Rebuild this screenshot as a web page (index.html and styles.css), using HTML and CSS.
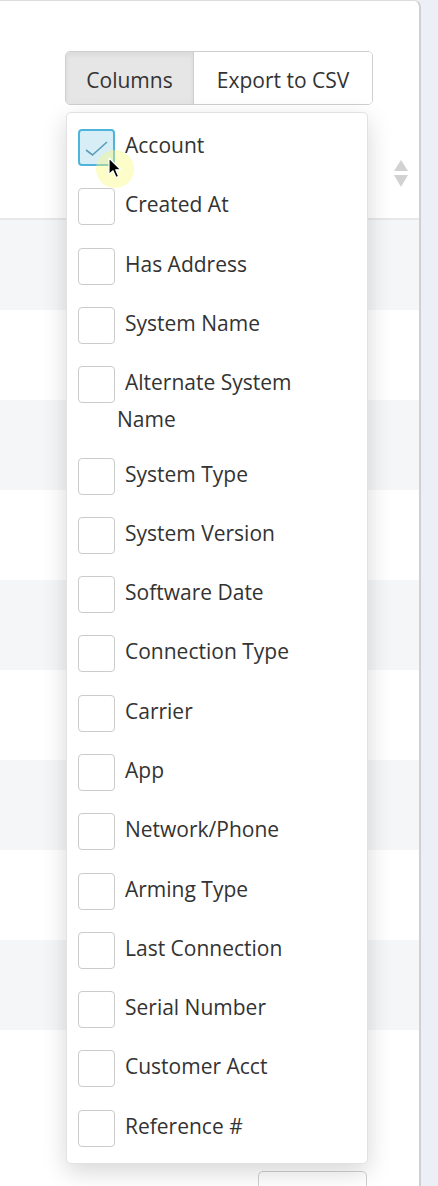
FILE: index.html
```html
<!DOCTYPE html>
<html>

<head>
    <link rel="stylesheet" href="styles.css">
</head>

<body>
    <div class="card">
        <div class="toolbar">
            <div class="btn-group">
                <div class="btn active">Columns</div>
                <div class="btn">Export to CSV</div>
            </div>

            <div class="dropdown">
                <label class="col-option"><span class="box checked"><svg width="34" height="34" viewBox="0 0 34 34"><path d="M6 19 L12.5 24 L27 11" fill="none" stroke="#5b9db7" stroke-width="1.6"/></svg></span>Account</label>
                <label class="col-option"><span class="box"></span>Created At</label>
                <label class="col-option"><span class="box"></span>Has Address</label>
                <label class="col-option"><span class="box"></span>System Name</label>
                <label class="col-option"><span class="box"></span>Alternate System Name</label>
                <label class="col-option"><span class="box"></span>System Type</label>
                <label class="col-option"><span class="box"></span>System Version</label>
                <label class="col-option"><span class="box"></span>Software Date</label>
                <label class="col-option"><span class="box"></span>Connection Type</label>
                <label class="col-option"><span class="box"></span>Carrier</label>
                <label class="col-option"><span class="box"></span>App</label>
                <label class="col-option"><span class="box"></span>Network/Phone</label>
                <label class="col-option"><span class="box"></span>Arming Type</label>
                <label class="col-option"><span class="box"></span>Last Connection</label>
                <label class="col-option"><span class="box"></span>Serial Number</label>
                <label class="col-option"><span class="box"></span>Customer Acct</label>
                <label class="col-option"><span class="box"></span>Reference #</label>
            </div>

            <!-- mouse pointer with click highlight -->
            <div class="pointer">
                <span class="halo"></span>
                <svg class="arrow" width="16" height="24" viewBox="0 0 16 24">
                    <path d="M1 1 L1 17.5 L5 13.8 L8 20.5 L10.6 19.3 L7.7 12.8 L12.8 12.8 Z" fill="#000" stroke="#fff" stroke-width="1.2" stroke-linejoin="round"/>
                </svg>
            </div>
        </div>

        <div class="thead">
            <svg class="sort" width="18" height="28" viewBox="0 0 18 28">
                <path d="M9 0 L16 11 L2 11 Z" fill="#d2d2d2"/>
                <path d="M9 27 L16 15 L2 15 Z" fill="#d2d2d2"/>
            </svg>
        </div>

        <div class="tbody">
            <div class="row"></div>
            <div class="row"></div>
            <div class="row"></div>
            <div class="row"></div>
            <div class="row"></div>
            <div class="row"></div>
            <div class="row"></div>
            <div class="row"></div>
            <div class="row"></div>
            <div class="row"></div>
        </div>

        <div class="footer">
            <div class="page-btn"></div>
        </div>
    </div>
</body>

</html>
```

FILE: styles.css
```css
body {
    margin: 0;
    background: #eceff5;
    font-family: "Open Sans", "Noto Sans", sans-serif;
    color: #333;
    overflow: hidden;
}

.card {
    width: 419px;
    height: 1186px;
    background: white;
    border-top: 1px solid #dcdcdc;
    border-right: 2px solid #cfd0d3;
    border-top-right-radius: 7px;
}

.toolbar {
    position: relative;
    padding: 50px 0 0 65px;
}

.btn-group {
    display: flex;
    width: 308px;
    height: 54px;
    box-sizing: border-box;
    border: 1.5px solid #cfcfcf;
    border-radius: 5px;
    overflow: hidden;
}

.btn {
    display: flex;
    align-items: center;
    justify-content: center;
    padding-top: 3px;
    font-size: 21px;
    background: white;
}

.btn:first-child {
    width: 127px;
    border-right: 1.5px solid #cfcfcf;
}

.btn:last-child {
    flex: 1;
}

.btn.active {
    background: #e6e6e6;
    box-shadow: inset 0 3px 5px rgba(0, 0, 0, 0.06);
}

.dropdown {
    position: absolute;
    top: 111px;
    left: 66px;
    width: 300px;
    padding: 5px 0 5px;
    background: white;
    border: 1px solid #e2e2e2;
    border-radius: 5px;
    box-shadow: 0 8px 24px rgba(0, 0, 0, 0.16);
    z-index: 2;
}

.col-option {
    display: block;
    padding: 11.15px 12px 11.15px 50px;
    text-indent: -39px;
    font-size: 21px;
    line-height: 32px;
}

.box {
    display: inline-block;
    width: 37px;
    height: 37px;
    box-sizing: border-box;
    margin-right: 10px;
    border: 1.5px solid #cbcbcb;
    border-radius: 4px;
    vertical-align: middle;
    text-indent: 0;
}

.box.checked {
    background: #d8eef7;
    border: 2px solid #4fb4da;
}

.box svg {
    display: block;
}

.pointer {
    position: absolute;
    left: 96px;
    top: 149px;
    width: 40px;
    height: 40px;
    z-index: 3;
}

.halo {
    position: absolute;
    left: 0;
    top: 0;
    width: 38px;
    height: 38px;
    border-radius: 50%;
    background: rgba(250, 250, 120, 0.4);
}

.arrow {
    position: absolute;
    left: 12px;
    top: 7px;
}

.thead {
    height: 113px;
    display: flex;
    justify-content: flex-end;
    align-items: flex-end;
    padding-right: 9px;
    border-bottom: 2px solid #e8e8e8;
}

.sort {
    margin-bottom: 30px;
}

.row {
    height: 90px;
}

.row:nth-child(odd) {
    background: #f5f6f8;
}

.footer {
    padding: 51px 0 0 258px;
}

.page-btn {
    width: 109px;
    height: 50px;
    box-sizing: border-box;
    border: 1.5px solid #d0d0d0;
    border-radius: 5px;
}
```
